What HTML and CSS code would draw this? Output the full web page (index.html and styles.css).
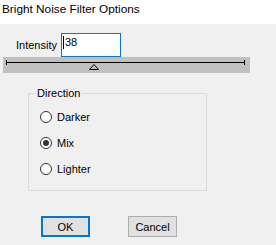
FILE: index.html
```html
<!DOCTYPE html>
<html lang="en">
<head>
  <meta charset="UTF-8">
  <title>Bright Noise Filter Options</title>
  <link rel="stylesheet" href="styles.css">
</head>
<body>
  <div class="dialog">
    <div class="titlebar">Bright Noise Filter Options</div>

    <div class="intensity-row">
      <label class="intensity-label" for="intensity">Intensity</label>
      <div class="edit" id="intensity"><span class="caret"></span>38</div>
    </div>

    <!-- slider track -->
    <div class="slider">
      <svg width="247" height="16" viewBox="0 0 247 16">
        <line x1="3" y1="5.5" x2="242" y2="5.5" stroke="#000" stroke-width="1"/>
        <line x1="3.5" y1="3" x2="3.5" y2="8" stroke="#000" stroke-width="1"/>
        <line x1="241.5" y1="3" x2="241.5" y2="8" stroke="#000" stroke-width="1"/>
        <polygon points="91,7.5 86.5,12.5 95.5,12.5" fill="#c0c0c0" stroke="#000" stroke-width="1"/>
      </svg>
    </div>

    <fieldset class="group">
      <legend>Direction</legend>
      <div class="radio-row">
        <span class="radio"></span>
        <span>Darker</span>
      </div>
      <div class="radio-row">
        <span class="radio checked"></span>
        <span>Mix</span>
      </div>
      <div class="radio-row">
        <span class="radio"></span>
        <span>Lighter</span>
      </div>
    </fieldset>

    <div class="buttons">
      <button class="btn btn-default" type="button">OK</button>
      <button class="btn" type="button">Cancel</button>
    </div>
  </div>
</body>
</html>
```

FILE: styles.css
```css
/* Dialog frame */
html, body {
    margin: 0;
    padding: 0;
}

body {
    font-family: "Liberation Sans", Arial, sans-serif;
    font-size: 11px;
    color: #000000;
}

.dialog {
    width: 276px;
    height: 245px;
    background-color: #f0f0f0;
    overflow: hidden;
}

.titlebar {
    height: 24px;
    box-sizing: border-box;
    padding-left: 2px;
    line-height: 19px;
    font-size: 11.8px;
    background-color: #ffffff;
}

/* Intensity edit */
.intensity-row {
    display: flex;
    align-items: flex-start;
    margin-top: 9px;
    padding-left: 16px;
}

.intensity-label {
    line-height: 13px;
    padding-top: 6px;
}

.edit {
    width: 60px;
    height: 24px;
    margin-left: 4px;
    box-sizing: border-box;
    border: 1px solid #0078d7;
    background-color: #ffffff;
    padding: 2px 0 0 1px;
    line-height: 13px;
}

.caret {
    display: inline-block;
    width: 1px;
    height: 13px;
    margin-right: 1px;
    vertical-align: top;
    background-color: #000000;
}

/* Slider */
.slider {
    width: 247px;
    height: 16px;
    margin-left: 3px;
    background-color: #c0c0c0;
}

.slider svg {
    display: block;
}

/* Group box */
.group {
    width: 179px;
    box-sizing: border-box;
    margin: 14px 0 0 28px;
    padding: 4px 0 8px 6px;
    border: 1px solid #dcdcdc;
}

.group legend {
    padding: 0 2px;
    line-height: 13px;
}

.radio-row {
    display: flex;
    align-items: center;
    height: 26px;
    padding-left: 5px;
    gap: 5px;
}

.radio {
    position: relative;
    width: 12px;
    height: 12px;
    box-sizing: border-box;
    border: 1px solid #333333;
    border-radius: 50%;
    background-color: #ffffff;
}

.radio.checked::after {
    content: "";
    position: absolute;
    left: 2px;
    top: 2px;
    width: 6px;
    height: 6px;
    border-radius: 50%;
    background-color: #333333;
}

/* Buttons */
.buttons {
    display: flex;
    gap: 38px;
    margin-top: 25px;
    padding-left: 41px;
}

.btn {
    width: 49px;
    height: 21px;
    padding: 0;
    box-sizing: border-box;
    font-family: "Liberation Sans", Arial, sans-serif;
    font-size: 11px;
    color: #000000;
    background-color: #e1e1e1;
    border: 1px solid #adadad;
    border-radius: 0;
}

.btn-default {
    border: 2px solid #0078d7;
}
```
